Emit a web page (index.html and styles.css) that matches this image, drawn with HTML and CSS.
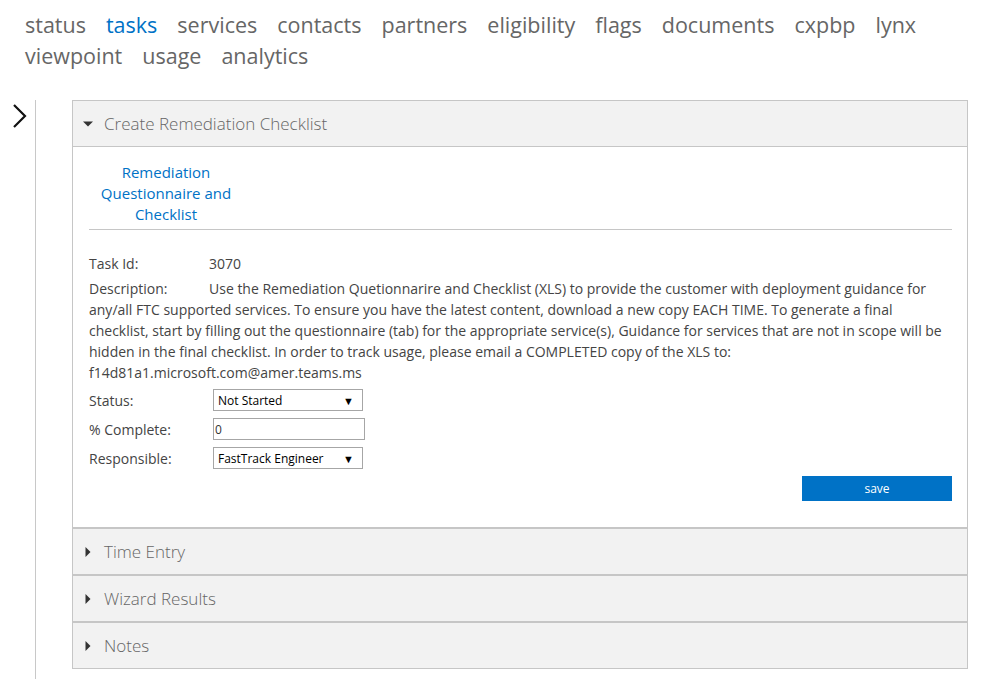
FILE: index.html
```html
<!DOCTYPE html>
<html>
<head>
<meta charset="utf-8">
<link rel="stylesheet" href="styles.css">
</head>
<body>
<nav class="nav">
  <a class="nav-item">status</a>
  <a class="nav-item active">tasks</a>
  <a class="nav-item">services</a>
  <a class="nav-item">contacts</a>
  <a class="nav-item">partners</a>
  <a class="nav-item">eligibility</a>
  <a class="nav-item">flags</a>
  <a class="nav-item">documents</a>
  <a class="nav-item">cxpbp</a>
  <a class="nav-item">lynx</a>
  <a class="nav-item">viewpoint</a>
  <a class="nav-item">usage</a>
  <a class="nav-item">analytics</a>
</nav>
<div class="main">
  <div class="rail">
    <svg class="chev" width="16" height="26" viewBox="0 0 16 26"><path d="M3 2 L14 13 L3 24" fill="none" stroke="#111" stroke-width="2.2"/></svg>
  </div>
  <div class="content">
    <div class="accordion">
      <section class="panel open">
        <div class="panel-head">
          <svg class="caret" width="10" height="10" viewBox="0 0 10 10"><path d="M0 2.5 L10 2.5 L5 7.5 Z" fill="#333"/></svg>
          <span>Create Remediation Checklist</span>
        </div>
        <div class="panel-body">
          <div class="doc-links">
            <a class="doc-link">Remediation Questionnaire and Checklist</a>
          </div>
          <div class="fields">
            <div class="row"><span class="label">Task Id:</span><span class="value">3070</span></div>
            <div class="row"><span class="label">Description:</span><span class="value">Use the Remediation Quetionnarire and Checklist (XLS) to provide the customer with deployment guidance for any/all FTC supported services. To ensure you have the latest content, download a new copy EACH TIME. To generate a final checklist, start by filling out the questionnaire (tab) for the appropriate service(s), Guidance for services that are not in scope will be hidden in the final checklist. In order to track usage, please email a COMPLETED copy of the XLS to: f14d81a1.microsoft.com@amer.teams.ms</span></div>
            <div class="row form-row"><span class="label">Status:</span><div class="select"><span>Not Started</span><span class="arrow">&#9660;</span></div></div>
            <div class="row form-row"><span class="label">% Complete:</span><div class="input">0</div></div>
            <div class="row form-row"><span class="label">Responsible:</span><div class="select"><span>FastTrack Engineer</span><span class="arrow">&#9660;</span></div></div>
          </div>
          <div class="actions"><button class="save">save</button></div>
        </div>
      </section>
      <section class="panel">
        <div class="panel-head">
          <svg class="caret" width="10" height="10" viewBox="0 0 10 10"><path d="M2.5 0 L7.5 5 L2.5 10 Z" fill="#333"/></svg>
          <span>Time Entry</span>
        </div>
      </section>
      <section class="panel">
        <div class="panel-head">
          <svg class="caret" width="10" height="10" viewBox="0 0 10 10"><path d="M2.5 0 L7.5 5 L2.5 10 Z" fill="#333"/></svg>
          <span>Wizard Results</span>
        </div>
      </section>
      <section class="panel">
        <div class="panel-head">
          <svg class="caret" width="10" height="10" viewBox="0 0 10 10"><path d="M2.5 0 L7.5 5 L2.5 10 Z" fill="#333"/></svg>
          <span>Notes</span>
        </div>
      </section>
    </div>
  </div>
</div>
</body>
</html>
```

FILE: styles.css
```css
html, body {
  margin: 0;
  padding: 0;
  background: #fff;
  font-family: "Open Sans", "Noto Sans", sans-serif;
  color: #333;
}

.nav {
  display: flex;
  flex-wrap: wrap;
  column-gap: 20px;
  padding: 9px 0 0 25px;
  width: 920px;
  font-size: 21.5px;
  line-height: 31px;
}

.nav-item {
  color: #666;
  text-decoration: none;
}

.nav-item.active {
  color: #0072c6;
}

.main {
  display: flex;
  margin-top: 29px;
  height: 579px;
}

.rail {
  width: 36px;
  border-right: 1px solid #c8c8c8;
  box-sizing: border-box;
  padding: 3px 0 0 11px;
}

.content {
  flex: 1;
  padding-left: 36px;
  padding-right: 15px;
}

.accordion {
  width: 894px;
  border: 1px solid #c6c6c6;
}

.panel + .panel {
  border-top: 2px solid #c6c6c6;
}

.panel-head {
  display: flex;
  align-items: center;
  height: 45px;
  background: #f2f2f2;
  padding-left: 10px;
  font-size: 17px;
  font-weight: 300;
  color: #666;
}

.panel-head .caret {
  margin-right: 11px;
}

.panel.open .panel-head {
  border-bottom: 1px solid #c6c6c6;
}

.panel-body {
  padding: 15px 15px 26px 16px;
}

.doc-links {
  border-bottom: 1px solid #c6c6c6;
  padding-bottom: 4px;
  margin-bottom: 23px;
}

.doc-link {
  display: block;
  width: 140px;
  text-align: center;
  color: #0072c6;
  font-size: 15px;
  line-height: 21px;
  margin-left: 7px;
}

.fields {
  font-size: 14px;
  line-height: 21px;
  color: #444;
}

.row {
  margin-bottom: 4px;
}

.label {
  display: inline-block;
  width: 120px;
}

.form-row {
  display: flex;
  align-items: center;
  margin-bottom: 7px;
}

.row + .form-row {
  margin-top: 6px;
}

.form-row + .form-row {
  margin-top: 0;
}

.form-row .label {
  width: 124px;
}

.select, .input {
  box-sizing: border-box;
  height: 22px;
  border: 1px solid #a6a6a6;
  font-size: 12px;
  color: #000;
  display: flex;
  align-items: center;
}

.select {
  width: 150px;
  justify-content: space-between;
  padding: 0 8px 0 4px;
}

.select .arrow {
  font-size: 11px;
}

.input {
  width: 152px;
  padding-left: 1px;
  color: #333;
}

.actions {
  display: flex;
  justify-content: flex-end;
  margin-top: 0;
}

.save {
  width: 150px;
  height: 25px;
  background: #0072c6;
  border: none;
  color: #fff;
  font-family: inherit;
  font-size: 12px;
}
```
